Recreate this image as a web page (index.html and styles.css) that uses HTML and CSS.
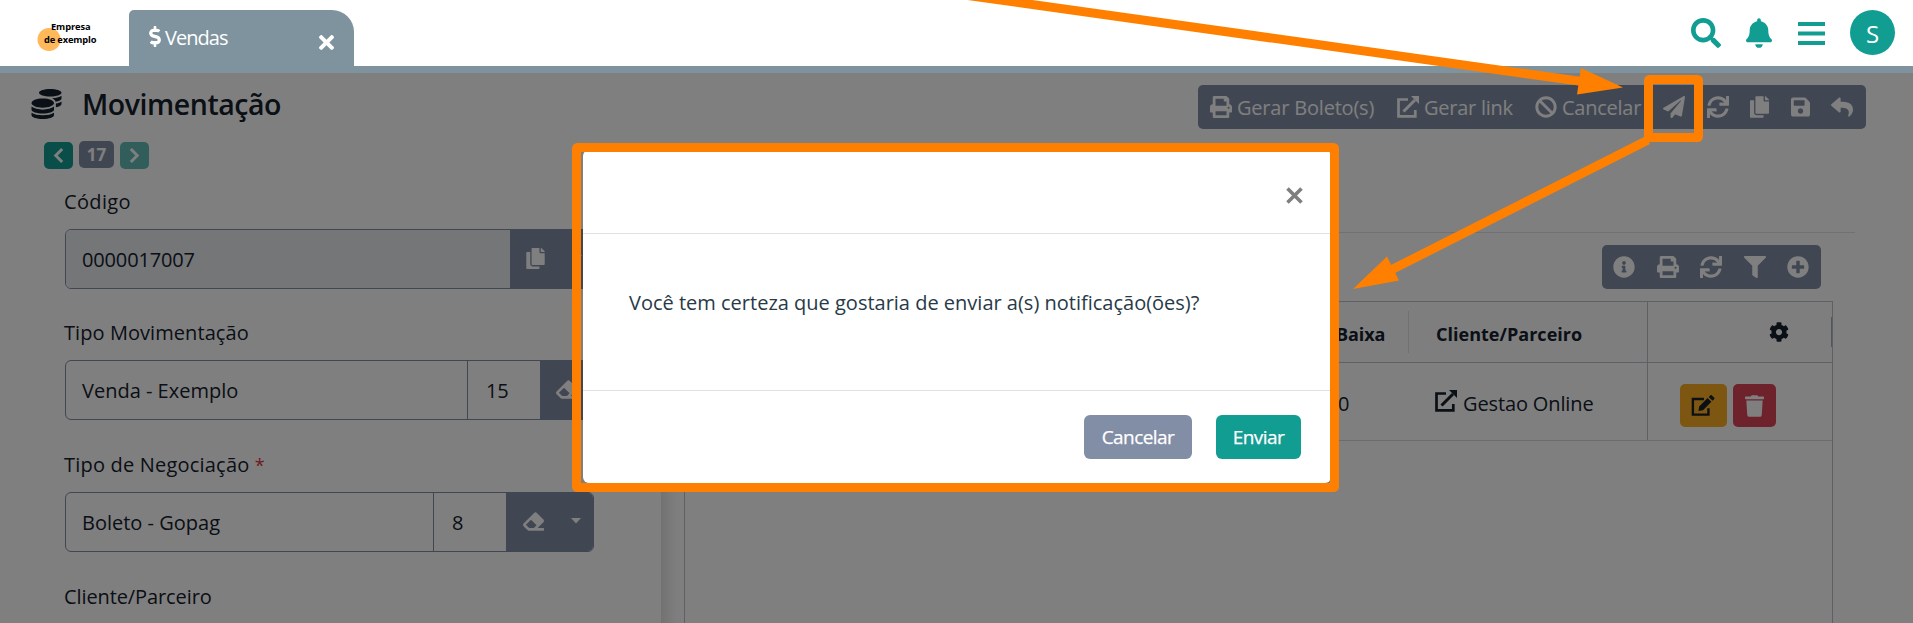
FILE: index.html
```
<!DOCTYPE html>
<html lang="pt-BR">
<head>
<meta charset="utf-8">
<title>Vendas</title>
<link rel="stylesheet" href="styles.css">
</head>
<body>
<svg class="sprite" aria-hidden="true">
  <symbol id="search" viewBox="0 0 512 512"><path d="M505 442.7L405.3 343c-4.5-4.5-10.6-7-17-7H372c27.6-35.3 44-79.7 44-128C416 93.1 322.9 0 208 0S0 93.1 0 208s93.1 208 208 208c48.3 0 92.7-16.4 128-44v16.3c0 6.4 2.5 12.5 7 17l99.7 99.7c9.4 9.4 24.6 9.4 33.9 0l28.3-28.3c9.4-9.4 9.4-24.6.1-34zM208 336c-70.7 0-128-57.2-128-128 0-70.7 57.2-128 128-128 70.7 0 128 57.2 128 128 0 70.7-57.2 128-128 128z"/></symbol>
  <symbol id="bell" viewBox="0 0 448 512"><path d="M224 512c35.32 0 63.97-28.65 63.97-64H160.03c0 35.35 28.65 64 63.97 64zm215.39-149.71c-19.32-20.76-55.47-51.99-55.47-154.29 0-77.7-54.48-139.9-127.94-155.16V32c0-17.67-14.32-32-31.98-32s-31.98 14.33-31.98 32v20.84C118.56 68.1 64.08 130.3 64.08 208c0 102.3-36.15 133.53-55.47 154.29-6 6.45-8.66 14.16-8.61 21.71.11 16.4 12.98 32 32.1 32h383.8c19.12 0 32-15.6 32.1-32 .05-7.55-2.61-15.27-8.61-21.71z"/></symbol>
  <symbol id="bars" viewBox="0 0 27 24"><path d="M0 1h27v4H0zM0 10.5h27v4H0zM0 20h27v4H0z"/></symbol>
  <symbol id="times" viewBox="0 80 352 352"><path d="M242.72 256l100.07-100.07c12.28-12.28 12.28-32.19 0-44.48l-22.24-22.24c-12.28-12.28-32.19-12.28-44.48 0L176 189.28 75.93 89.21c-12.28-12.28-32.19-12.28-44.48 0L9.21 111.45c-12.28 12.28-12.28 32.19 0 44.48L109.28 256 9.21 356.07c-12.28 12.28-12.28 32.19 0 44.48l22.24 22.24c12.28 12.28 32.2 12.28 44.48 0L176 322.72l100.07 100.07c12.28 12.28 32.2 12.28 44.48 0l22.24-22.24c12.28-12.28 12.28-32.19 0-44.48L242.72 256z"/></symbol>
  <symbol id="dollar" viewBox="0 0 288 512"><path d="M209.2 233.4l-108-31.6C88.7 198.2 80 186.5 80 173.5c0-16.3 13.2-29.5 29.5-29.5h66.3c12.2 0 24.2 3.7 34.2 10.5 6.1 4.1 14.3 3.1 19.5-2l34.8-34c7.1-6.9 6.1-18.4-1.8-24.5C238 74.8 207.4 64.1 176 64V16c0-8.800-7.200-16-16-16h-32c-8.800 0-16 7.200-16 16v48h-2.500C45.800 64-5.400 118.700.500 183.600c4.200 46.100 39.400 83.600 83.800 96.600l102.500 30c12.500 3.700 21.200 15.300 21.200 28.300 0 16.300-13.200 29.500-29.500 29.500h-66.300C100 368 88 364.300 78 357.500c-6.100-4.100-14.300-3.100-19.500 2l-34.800 34c-7.100 6.900-6.100 18.400 1.800 24.500 24.500 19.200 55.100 29.900 86.500 30v48c0 8.800 7.200 16 16 16h32c8.800 0 16-7.200 16-16v-48.200c46.600-.9 90.300-28.600 105.700-72.700 21.500-61.600-14.600-124.800-72.500-141.700z"/></symbol>
  <symbol id="coins" viewBox="0 0 512 512"><path d="M0 405.3V448c0 35.3 86 64 192 64s192-28.7 192-64v-42.7C342.7 434.4 267.2 448 192 448S41.3 434.4 0 405.3zM320 128c106 0 192-28.700 192-64S426 0 320 0 128 28.700 128 64s86 64 192 64zM0 300.400V352c0 35.300 86 64 192 64s192-28.700 192-64v-51.600c-41.300 34-116.900 51.600-192 51.600S41.300 334.400 0 300.400zm416 11c57.300-11.100 96-31.700 96-55.400v-42.700c-23.200 16.400-57.300 27.600-96 34.500v63.600zM192 160C86 160 0 195.800 0 240s86 80 192 80 192-35.800 192-80-86-80-192-80zm219.300 56.300c60-10.800 100.700-32 100.700-56.300v-42.700c-35.500 25.100-96.500 38.600-160.700 41.800 29.500 14.300 51.200 33.500 60 57.200z"/></symbol>
  <symbol id="print" viewBox="0 0 512 512"><path d="M448 192V77.250c0-8.490-3.370-16.620-9.370-22.630L393.370 9.370c-6-6-14.140-9.370-22.630-9.370H96C78.330 0 64 14.330 64 32v160c-35.350 0-64 28.650-64 64v112c0 8.840 7.160 16 16 16h48v96c0 17.670 14.330 32 32 32h320c17.670 0 32-14.330 32-32v-96h48c8.840 0 16-7.160 16-16V256c0-35.350-28.650-64-64-64zm-64 256H128v-96h256v96zm0-224H128V64h192v48c0 8.840 7.160 16 16 16h48v96zm48 72c-13.250 0-24-10.750-24-24 0-13.260 10.750-24 24-24s24 10.740 24 24c0 13.250-10.750 24-24 24z"/></symbol>
  <symbol id="external" viewBox="0 0 22 22"><path d="M11 3.500H1.500v16.900h16.800V14" fill="none" stroke="currentColor" stroke-width="2.700"/><path d="M6.500 15.500L18 4" fill="none" stroke="currentColor" stroke-width="3"/><path d="M14 0h8v8z"/></symbol>
  <symbol id="ban" viewBox="0 0 22 22"><g fill="none" stroke="currentColor" stroke-width="2.900"><circle cx="11" cy="11" r="9.200"/><path d="M4.500 4.500l13 13"/></g></symbol>
  <symbol id="plane" viewBox="0 0 512 512"><path d="M476 3.200L12.500 270.600c-18.100 10.400-15.800 35.600 2.200 43.200L121 358.400l287.300-253.200c5.500-4.900 13.300 2.600 8.600 8.300L176 407v80.500c0 23.600 28.500 32.900 42.500 15.800L282 426l124.600 52.200c14.200 6 30.400-2.900 33-18.200l72-432C515 7.800 493.300-6.800 476 3.200z"/></symbol>
  <symbol id="sync" viewBox="0 0 512 512"><path d="M440.650 12.570l4 82.770A247.160 247.160 0 0 0 255.830 8C134.730 8 33.910 94.920 12.290 209.820A12 12 0 0 0 24.090 224h49.050a12 12 0 0 0 11.670-9.260 175.910 175.910 0 0 1 317-56.940l-101.460-4.860a12 12 0 0 0-12.570 12v47.410a12 12 0 0 0 12 12H500a12 12 0 0 0 12-12V12a12 12 0 0 0-12-12h-47.370a12 12 0 0 0-11.980 12.570zM255.830 432a175.610 175.610 0 0 1-146-77.800l101.800 4.870a12 12 0 0 0 12.570-12v-47.400a12 12 0 0 0-12-12H12a12 12 0 0 0-12 12V500a12 12 0 0 0 12 12h47.350a12 12 0 0 0 12-12.600l-4.150-82.570A247.170 247.170 0 0 0 255.830 504c121.110 0 221.930-86.920 243.550-201.820a12 12 0 0 0-11.800-14.180h-49.050a12 12 0 0 0-11.670 9.260A175.860 175.860 0 0 1 255.830 432z"/></symbol>
  <symbol id="copy" viewBox="0 0 448 512"><path d="M320 448v40c0 13.255-10.745 24-24 24H24c-13.255 0-24-10.745-24-24V120c0-13.255 10.745-24 24-24h72v296c0 30.879 25.121 56 56 56h168zm0-344V0H152c-13.255 0-24 10.745-24 24v368c0 13.255 10.745 24 24 24h272c13.255 0 24-10.745 24-24V128H344c-13.200 0-24-10.800-24-24zm120.971-31.029L375.029 7.029A24 24 0 0 0 358.059 0H352v96h96v-6.059a24 24 0 0 0-7.029-16.970z"/></symbol>
  <symbol id="save" viewBox="0 0 448 512"><path d="M433.941 129.941l-83.882-83.882A48 48 0 0 0 316.118 32H48C21.490 32 0 53.490 0 80v352c0 26.510 21.490 48 48 48h352c26.510 0 48-21.490 48-48V163.882a48 48 0 0 0-14.059-33.941zM224 416c-35.346 0-64-28.654-64-64 0-35.346 28.654-64 64-64s64 28.654 64 64c0 35.346-28.654 64-64 64zm96-304.520V212c0 6.627-5.373 12-12 12H76c-6.627 0-12-5.373-12-12V108c0-6.627 5.373-12 12-12h228.520c3.183 0 6.235 1.264 8.485 3.515l3.480 3.480A11.996 11.996 0 0 1 320 111.480z"/></symbol>
  <symbol id="reply" viewBox="0 0 512 512"><path d="M8.309 189.836L184.313 37.851C199.719 24.546 224 35.347 224 56.015v80.053c160.629 1.839 288 34.032 288 186.258 0 61.441-39.581 122.309-83.333 154.132-13.653 9.931-33.111-2.533-28.077-18.631 45.344-145.012-21.507-183.510-176.590-185.742V360c0 20.700-24.300 31.453-39.687 18.164l-176.004-152c-11.071-9.562-11.086-26.753 0-36.328z"/></symbol>
  <symbol id="info" viewBox="0 0 512 512"><path d="M256 8C119.043 8 8 119.083 8 256c0 136.997 111.043 248 248 248s248-111.003 248-248C504 119.083 392.957 8 256 8zm0 110c23.196 0 42 18.804 42 42s-18.804 42-42 42-42-18.804-42-42 18.804-42 42-42zm56 254c0 6.627-5.373 12-12 12h-88c-6.627 0-12-5.373-12-12v-24c0-6.627 5.373-12 12-12h12v-64h-12c-6.627 0-12-5.373-12-12v-24c0-6.627 5.373-12 12-12h64c6.627 0 12 5.373 12 12v100h12c6.627 0 12 5.373 12 12v24z"/></symbol>
  <symbol id="plus" viewBox="0 0 512 512"><path d="M256 8C119 8 8 119 8 256s111 248 248 248 248-111 248-248S393 8 256 8zm144 276c0 6.600-5.400 12-12 12h-92v92c0 6.600-5.400 12-12 12h-56c-6.600 0-12-5.400-12-12v-92h-92c-6.600 0-12-5.400-12-12v-56c0-6.600 5.400-12 12-12h92v-92c0-6.600 5.400-12 12-12h56c6.600 0 12 5.400 12 12v92h92c6.600 0 12 5.400 12 12v56z"/></symbol>
  <symbol id="filter" viewBox="0 0 512 512"><path d="M487.976 0H24.028C2.710 0-8.047 25.866 7.058 40.971L192 225.941V432c0 7.831 3.821 15.170 10.237 19.662l80 55.980C298.020 518.690 320 507.493 320 487.980V225.941l184.947-184.970C520.021 25.896 509.338 0 487.976 0z"/></symbol>
  <symbol id="cog" viewBox="0 0 512 512"><path d="M487.400 315.700l-42.600-24.600c4.300-23.200 4.300-47 0-70.200l42.600-24.600c4.900-2.800 7.100-8.600 5.500-14-11.100-35.600-30-67.800-54.700-94.600-3.800-4.100-10-5.100-14.800-2.300L380.800 110c-17.900-15.400-38.500-27.300-60.800-35.100V25.800c0-5.600-3.900-10.500-9.400-11.700-36.700-8.200-74.300-7.800-109.200 0-5.500 1.200-9.400 6.100-9.400 11.700V75c-22.200 7.900-42.800 19.800-60.800 35.100L88.700 85.500c-4.900-2.800-11-1.900-14.800 2.300-24.700 26.700-43.600 58.900-54.700 94.600-1.700 5.400.6 11.200 5.500 14L67.300 221c-4.300 23.200-4.300 47 0 70.200l-42.600 24.600c-4.900 2.800-7.100 8.600-5.500 14 11.100 35.600 30 67.800 54.700 94.600 3.800 4.100 10 5.100 14.800 2.300l42.600-24.600c17.900 15.400 38.500 27.300 60.800 35.100v49.200c0 5.600 3.900 10.500 9.400 11.700 36.700 8.200 74.300 7.800 109.200 0 5.500-1.200 9.400-6.100 9.400-11.700v-49.200c22.200-7.900 42.800-19.800 60.800-35.100l42.600 24.600c4.900 2.800 11 1.900 14.800-2.300 24.700-26.700 43.600-58.900 54.700-94.600 1.500-5.500-.7-11.300-5.600-14.100zM256 336c-44.100 0-80-35.900-80-80s35.900-80 80-80 80 35.900 80 80-35.900 80-80 80z"/></symbol>
  <symbol id="trash" viewBox="0 0 448 512"><path d="M432 32H312l-9.400-18.700A24 24 0 0 0 281.100 0H166.800a23.720 23.720 0 0 0-21.400 13.300L136 32H16A16 16 0 0 0 0 48v32a16 16 0 0 0 16 16h416a16 16 0 0 0 16-16V48a16 16 0 0 0-16-16zM53.200 467a48 48 0 0 0 47.900 45h245.800a48 48 0 0 0 47.900-45L416 128H32z"/></symbol>
  <symbol id="eraser" viewBox="0 0 512 512"><path d="M497.941 273.941c18.745-18.745 18.745-49.137 0-67.882l-160-160c-18.745-18.745-49.136-18.746-67.883 0l-256 256c-18.745 18.745-18.745 49.137 0 67.882l96 96A48.004 48.004 0 0 0 144 480h356c6.627 0 12-5.373 12-12v-40c0-6.627-5.373-12-12-12H355.883l142.058-142.059zm-302.627-62.627l137.373 137.373L265.373 416H150.628l-80-80 124.686-124.686z"/></symbol>
  <symbol id="edit" viewBox="0 0 24 22"><path d="M13 4.200H1.400v16.300h16.300V14" fill="none" stroke="currentColor" stroke-width="2.500"/><path d="M16.800 3.200l4 4L12 16l-4.800.8.800-4.800zM18 2l1.600-1.600c.5-.5 1.200-.5 1.700 0l2.300 2.300c.5.500.5 1.200 0 1.700L22 6z"/></symbol>
  <symbol id="left" viewBox="0 0 12 18"><path d="M10 2L3 9l7 7" fill="none" stroke="currentColor" stroke-width="3.200"/></symbol>
  <symbol id="right" viewBox="0 0 12 18"><path d="M2 2l7 7-7 7" fill="none" stroke="currentColor" stroke-width="3.200"/></symbol>
  <symbol id="caret" viewBox="0 0 10 6"><path d="M0 0h10L5 5.500z"/></symbol>
</svg>

<div class="app">
  <header class="topbar">
    <div class="logo"><span class="logo-a">Empresa</span><span class="logo-b">de exemplo</span></div>
    <div class="tab">
      <svg class="i-dollar"><use href="#dollar"/></svg><span class="tab-name">Vendas</span>
      <svg class="i-close"><use href="#times"/></svg>
    </div>
    <nav class="actions">
      <svg class="a-search"><use href="#search"/></svg>
      <svg class="a-bell"><use href="#bell"/></svg>
      <svg class="a-bars"><use href="#bars"/></svg>
      <span class="avatar">S</span>
    </nav>
  </header>
  <div class="band"></div>

  <main class="page">
    <section class="side">
      <div class="heading"><svg class="i-coins"><use href="#coins"/></svg><h1>Movimentação</h1></div>
      <div class="pager">
        <span class="pg"><svg><use href="#left"/></svg></span>
        <span class="pg-num">17</span>
        <span class="pg pg-off"><svg><use href="#right"/></svg></span>
      </div>
      <form class="form">
        <div class="field field-a">
          <label class="t-codigo">Código</label>
          <div class="group"><span class="val val-ro t-num">0000017007</span><span class="addon"><svg class="i-copy"><use href="#copy"/></svg><svg class="i-caret"><use href="#caret"/></svg></span></div>
        </div>
        <div class="field">
          <label class="t-tipo">Tipo Movimentação</label>
          <div class="group"><span class="val t-venda">Venda - Exemplo</span><span class="num">15</span><span class="addon addon-s"><svg class="i-era"><use href="#eraser"/></svg></span></div>
        </div>
        <div class="field">
          <label class="t-neg">Tipo de Negociação <b class="req">*</b></label>
          <div class="group"><span class="val t-bol">Boleto - Gopag</span><span class="num">8</span><span class="addon addon-m"><svg class="i-era"><use href="#eraser"/></svg><svg class="i-caret"><use href="#caret"/></svg></span></div>
        </div>
        <div class="field"><label class="t-cli">Cliente/Parceiro</label></div>
      </form>
    </section>

    <section class="content">
      <div class="toolbar">
        <svg class="w22"><use href="#print"/></svg><span class="tb1">Gerar Boleto(s)</span>
        <svg class="w22"><use href="#external"/></svg><span class="tb2">Gerar link</span>
        <svg class="w22"><use href="#ban"/></svg><span class="tb3">Cancelar</span>
        <div class="tools">
          <svg class="w22"><use href="#plane"/></svg>
          <svg class="w22"><use href="#sync"/></svg>
          <svg class="w19"><use href="#copy"/></svg>
          <svg class="w19"><use href="#save"/></svg>
          <svg class="w22"><use href="#reply"/></svg>
        </div>
      </div>
      <hr class="rule">
      <div class="gridbar">
        <svg><use href="#info"/></svg><svg><use href="#print"/></svg><svg><use href="#sync"/></svg><svg><use href="#filter"/></svg><svg><use href="#plus"/></svg>
      </div>
      <div class="table">
        <div class="row head">
          <div class="c1"><span>Baixa</span></div>
          <div class="c2"><span class="t-hcli">Cliente/Parceiro</span></div>
          <div class="c3"><svg class="i-cog"><use href="#cog"/></svg><i class="grip"></i></div>
        </div>
        <div class="row body">
          <div class="c1"><span class="zero">0</span></div>
          <div class="c2"><svg class="w22 ext"><use href="#external"/></svg><span class="t-gest">Gestao Online</span></div>
          <div class="c3"><span class="btn-edit"><svg><use href="#edit"/></svg></span><span class="btn-del"><svg><use href="#trash"/></svg></span></div>
        </div>
      </div>
    </section>
  </main>
</div>

<div class="backdrop"></div>

<div class="modal" role="dialog">
  <div class="m-head"><svg class="m-close" viewBox="0 0 17 17"><path d="M1.500 1.500l14 14M15.500 1.500l-14 14"/></svg></div>
  <div class="m-body"><p>Você tem certeza que gostaria de enviar a(s) notificação(ões)?</p></div>
  <div class="m-foot"><button class="b-cancel">Cancelar</button><button class="b-send">Enviar</button></div>
</div>

<svg class="marks" viewBox="0 0 1913 623">
  <rect x="576.500" y="147.500" width="758" height="340" rx="1"/>
  <rect x="1648.500" y="79.500" width="50" height="58" rx="1"/>
  <path d="M960 -5.600L1581 81.400M1648 140L1392 269.500"/>
  <path class="tip" d="M1623 87.500L1581 68l-4 26.500zM1353 289l34-32.500 12 24z"/>
</svg>
</body>
</html>
```
FILE: styles.css
```
* { box-sizing: border-box; }
html, body { margin: 0; height: 623px; overflow: hidden; }
body { font-family: "Open Sans", "Noto Sans", sans-serif; font-size: 20px; color: #14202c; background: #fff; position: relative; }
svg { fill: currentColor; display: block; flex: none; overflow: visible; }
.sprite { position: absolute; width: 0; height: 0; }
span, label, p, h1 { white-space: nowrap; }

.app { height: 623px; display: flex; flex-direction: column; overflow: hidden; }
.topbar { height: 66px; flex: none; display: flex; align-items: flex-end; }
.logo { width: 129px; height: 66px; padding: 20px 0 0 44px; font-size: 9.300px; font-weight: 700; color: #000; line-height: 13px; display: flex; flex-direction: column; background: radial-gradient(circle at 49px 39.500px, #ffb95a 11px, rgba(255,185,90,0) 12px); }
.logo-a { padding-left: 7px; letter-spacing: -.1px; }
.logo-b { letter-spacing: -.15px; }
.tab { width: 225px; height: 56px; background: #7e939e; color: #fff; border-radius: 5px 22px 0 0; display: flex; align-items: center; padding: 0 20px; }
.i-dollar { width: 12px; height: 21px; margin-bottom: 3px; }
.tab-name { margin-left: 4px; flex: 1; letter-spacing: -.95px; padding-bottom: 1px; }
.i-close { width: 15px; height: 15px; margin-top: 9px; }
.actions { margin-left: auto; height: 66px; display: flex; align-items: center; padding-right: 18px; color: #129d93; }
.a-search { width: 30px; height: 30px; }
.a-bell { width: 26px; height: 30px; margin-left: 25px; }
.a-bars { width: 27px; height: 24px; margin: 0 25px 1px 26px; }
.avatar { width: 45px; height: 45px; border-radius: 50%; background: #129d93; color: #fff; display: flex; align-items: center; justify-content: center; font-size: 24px; padding-top: 2px; margin-top: -1px; }
.band { height: 7px; flex: none; background: #7e939e; }

.page { flex: 1; display: flex; min-height: 0; }
.side { width: 661px; flex: none; }
.heading { height: 68px; display: flex; align-items: flex-start; padding: 16px 0 0 31px; }
.i-coins { width: 31px; height: 30px; }
h1 { margin: -1px 0 0 20px; font-size: 28.500px; font-weight: 600; line-height: 32px; letter-spacing: -.45px; }
.pager { display: flex; gap: 6px; padding-left: 44px; height: 39px; align-items: flex-start; }
.pg { width: 29px; height: 27px; margin-top: 1px; border-radius: 5px; background: #129d93; color: #fff; display: flex; align-items: center; justify-content: center; }
.pg svg { width: 11px; height: 17px; }
.pg-off { background: #63bdb6; }
.pg-num { width: 35px; height: 27px; border-radius: 5px; background: #828ea5; color: #fff; font-size: 17px; font-weight: 700; line-height: 27px; text-align: center; }
.form { height: 500px; box-shadow: 4px 0 18px rgba(0,0,0,.16); clip-path: inset(0 -24px 0 0); padding: 6px 0 0 65px; display: flex; flex-direction: column; }
.field { height: 132px; flex: none; }
.field-a { height: 131px; }
label { display: block; height: 43px; line-height: 32px; margin-left: -1px; }
.group { display: flex; width: 529px; height: 60px; border: 1px solid #828ea5; border-radius: 6px; overflow: hidden; }
.val { flex: 1; padding-left: 16px; line-height: 60px; }
.val-ro { background: #e9ecef; }
.num { width: 73px; border-left: 1px solid #828ea5; padding-left: 18px; line-height: 60px; }
.addon { width: 83px; background: #828ea5; color: #fff; display: flex; align-items: center; padding-left: 16px; }
.addon-s { width: 53px; }
.addon-m { width: 87px; padding-left: 17px; }
.i-copy { width: 19px; height: 21px; margin-bottom: 2px; }
.i-era { width: 21px; height: 21px; margin-bottom: 2px; }
.i-caret { width: 10px; height: 6px; margin: 0 0 3px 27px; }
.req { color: #dc3545; font-weight: 400; font-size: 18px; }
.t-num, .num { letter-spacing: -.15px; }
.t-codigo { letter-spacing: .35px; }
.t-tipo { letter-spacing: .07px; }
.t-neg { letter-spacing: .2px; }
.t-cli { letter-spacing: -.1px; }

.content { flex: 1; display: flex; flex-direction: column; padding: 12px 58px 0 23px; position: relative; }
.toolbar { align-self: flex-end; width: 668px; height: 44px; margin-right: -11px; background: #828ea5; color: #fff; border-radius: 5px; display: flex; align-items: center; padding-left: 12px; flex: none; }
.w22 { width: 22px; height: 22px; }
.w19 { width: 19px; height: 22px; }
.toolbar span { margin-left: 5px; flex: none; padding-top: 1px; }
.tb1 { width: 160px; letter-spacing: -.2px; }
.tb2 { width: 111px; letter-spacing: -.25px; }
.tb3 { width: 101px; letter-spacing: -.25px; }
.tools { display: flex; gap: 21.500px; }
.rule { width: 1171px; flex: none; height: 1px; border: 0; background: #dee2e6; margin: 103px 0 12px; }
.gridbar { align-self: flex-end; margin-right: 34px; width: 219px; height: 44px; flex: none; border-radius: 5px; background: #828ea5; color: #fff; display: flex; align-items: center; justify-content: space-between; padding: 0 12px 0 11px; }
.gridbar svg { width: 22px; height: 22px; }
.table { width: 1149px; height: 400px; margin-top: 12px; border: 1px solid #bdc3c7; flex: none; }
.row { display: flex; justify-content: flex-end; }
.head { height: 61px; border-bottom: 1px solid #bdc3c7; font-weight: 700; font-size: 18px; background: #fcfcfc; }
.body { height: 78px; border-bottom: 1px solid #d5d9dd; }
.c1 { width: 80px; display: flex; align-items: center; }
.head .c1 { height: 42px; margin-top: 9px; border-right: 1px solid #dee2e6; padding: 3px 0 0 7px; letter-spacing: -.1px; }
.body .c1 { padding-left: 9px; }
.c2 { width: 238px; display: flex; align-items: center; padding-left: 27px; }
.head .c2 { padding-top: 3px; }
.t-hcli { letter-spacing: .02px; }
.ext { margin: 0 0 6px -1px; }
.t-gest { margin-left: 6px; letter-spacing: -.13px; }
.body .c1, .body .c2 { padding-top: 4px; }
.c3 { width: 185px; border-left: 1px solid #bdc3c7; display: flex; align-items: center; padding-left: 32px; gap: 6px; }
.head .c3 { justify-content: flex-end; padding: 0; gap: 0; }
.i-cog { width: 20px; height: 20px; margin: 0 42px 1px 0; }
.grip { width: 1px; height: 30px; background: #a5adba; }
.btn-edit, .btn-del { height: 43px; border-radius: 5px; display: flex; align-items: center; justify-content: center; margin-top: 8px; }
.btn-edit { width: 47px; background: #fbae22; }
.btn-edit svg { width: 24px; height: 21px; margin-left: -2px; }
.btn-del { width: 43px; background: #dd4659; color: #fff; }
.btn-del svg { width: 19px; height: 22px; }

.backdrop { position: absolute; left: 0; right: 0; top: 73px; bottom: 0; background: rgba(0,0,0,.5); }
.modal { position: absolute; left: 583px; top: 150px; width: 748px; height: 333px; background: #fff; border-radius: 6px; display: flex; flex-direction: column; color: #283a47; }
.m-head { height: 84px; border-bottom: 1px solid #dee2e6; display: flex; justify-content: flex-end; padding: 37px 28px 0 0; }
.m-close { width: 17px; height: 17px; stroke: #7f7f7f; stroke-width: 3.600; }
.m-body { height: 157px; border-bottom: 1px solid #dee2e6; display: flex; align-items: center; padding-left: 46px; }
.m-body p { margin: 0 0 20px; letter-spacing: 0; }
.m-foot { display: flex; justify-content: flex-end; gap: 24px; padding: 24px 30px 0 0; }
button { height: 44px; border: 0; border-radius: 6px; color: #fff; font: 500 19px "Open Sans", sans-serif; padding: 0 0 1px; letter-spacing: -.55px; -webkit-text-stroke: .25px #fff; }
.b-cancel { width: 108px; background: #828ea5; }
.b-send { width: 85px; background: #129d93; }
.marks { position: absolute; left: 0; top: 0; width: 1913px; height: 623px; fill: none; stroke: #ff8000; stroke-width: 9; stroke-linejoin: round; pointer-events: none; overflow: hidden; }
.marks .tip { fill: #ff8000; stroke: none; }
```
